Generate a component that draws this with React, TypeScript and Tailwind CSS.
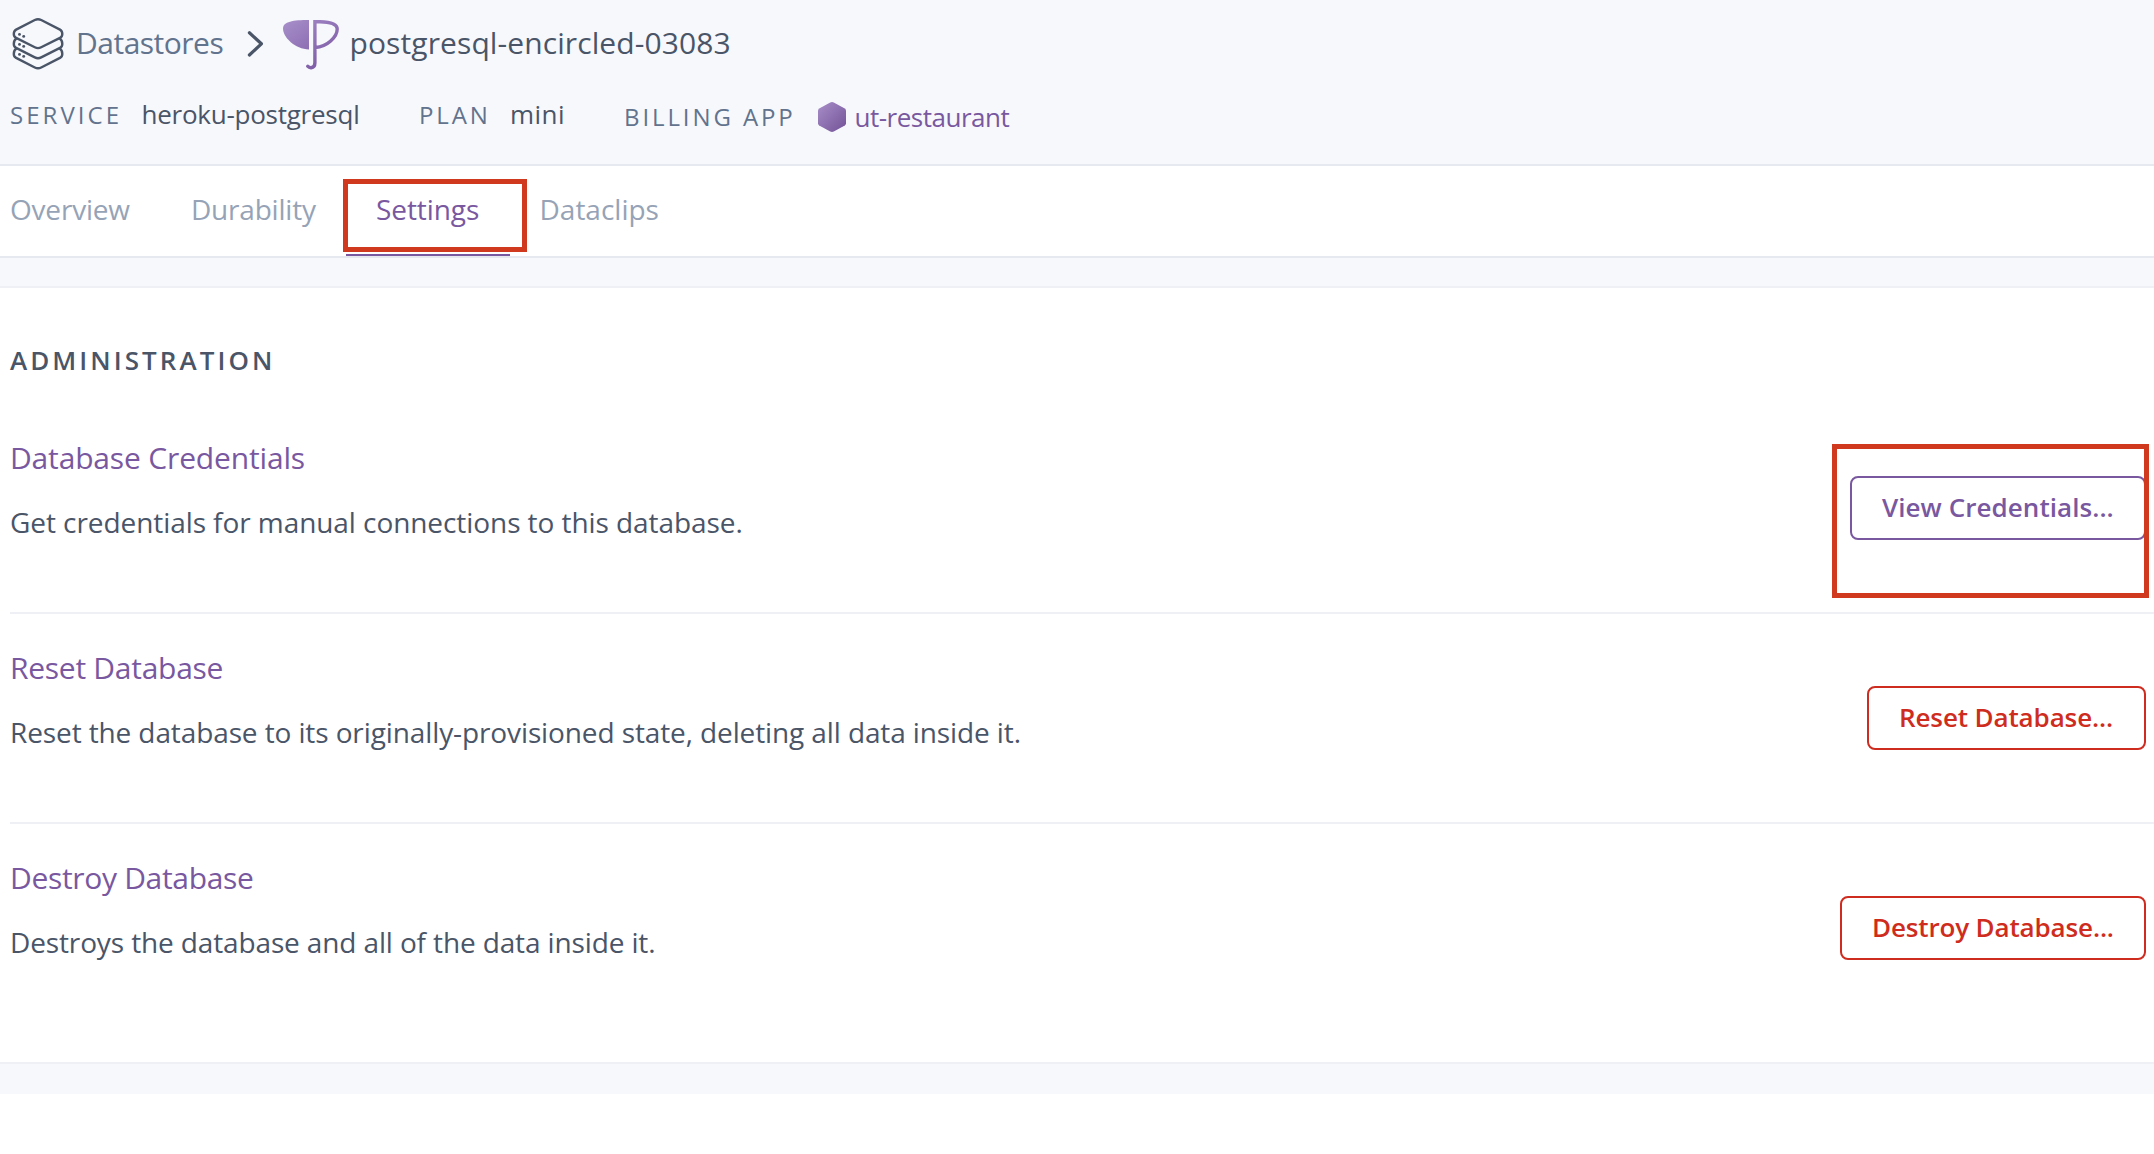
import React from "react";

function DatastoresIcon() {
  return (
    <svg className="h-[84px] w-[76px] shrink-0" viewBox="0 0 76 84" fill="none" stroke="#4a5568" strokeWidth="2.4" strokeLinejoin="round">
      <path d="M34.8 20 Q38 18.4 41.2 20 L60 29.6 Q62.3 31 62.3 33.9 Q62.3 36.6 60 37.9 L41.2 47.3 Q38 48.9 34.8 47.3 L16.1 37.9 Q13.8 36.6 13.8 33.9 Q13.8 31 16.1 29.6 Z" />
      <path d="M16.6 38.2 Q13.8 40 13.8 43.9 Q13.8 46.6 16.1 47.9 L34.8 57.4 Q38 59 41.2 57.4 L60 47.9 Q62.3 46.6 62.3 43.9 Q62.3 40 59.5 38.2" />
      <path d="M16.6 48.2 Q13.8 50 13.8 53.9 Q13.8 56.6 16.1 57.9 L34.8 67.5 Q38 69.1 41.2 67.5 L60 57.9 Q62.3 56.6 62.3 53.9 Q62.3 50 59.5 48.2" />
      <g fill="#4a5568" stroke="none">
        <circle cx="19.5" cy="34.4" r="1.45" />
        <circle cx="23.7" cy="36.4" r="1.45" />
        <circle cx="19.5" cy="44.4" r="1.45" />
        <circle cx="23.7" cy="46.4" r="1.45" />
        <circle cx="19.5" cy="54.4" r="1.45" />
        <circle cx="23.7" cy="56.4" r="1.45" />
      </g>
    </svg>
  );
}

function Chevron() {
  return (
    <svg className="h-[84px] w-[40px] shrink-0" viewBox="240 0 40 84" fill="none" stroke="#4a5568" strokeWidth="3.2" strokeLinecap="round" strokeLinejoin="round">
      <path d="M249.4 32.8 L261.4 43.8 L249.4 55" />
    </svg>
  );
}

function PostgresIcon() {
  return (
    <svg className="h-[84px] w-[69.5px] shrink-0" viewBox="280 0 69.5 84" fill="none">
      <defs>
        <linearGradient id="pg" gradientUnits="userSpaceOnUse" x1="286" y1="20" x2="320" y2="69">
          <stop offset="0" stopColor="#a78ec9" />
          <stop offset="1" stopColor="#7d5ba5" />
        </linearGradient>
      </defs>
      <path fill="url(#pg)" d="M309 20 V49.5 C295 49 283 37.5 283 28.5 C283 21.5 293 20 309 20 Z" />
      <path stroke="url(#pg)" strokeWidth="3.4" strokeLinecap="round" strokeLinejoin="miter" d="M307.7 66.2 C308.8 67.5 310 67.8 311.2 67.7 C313.6 67.5 314.9 65.8 314.9 63 V21.7 H320 C331.5 22 337.2 24 337.2 29 C337.2 37 327 46.8 315.4 47.5" />
    </svg>
  );
}

function HexagonIcon() {
  return (
    <svg className="h-[30px] w-[28px] shrink-0" viewBox="0 0 28 30">
      <defs>
        <linearGradient id="hex" x1="0" y1="0" x2="1" y2="1">
          <stop offset="0" stopColor="#a78ec9" />
          <stop offset="1" stopColor="#735296" />
        </linearGradient>
      </defs>
      <path fill="url(#hex)" d="M12.2 0.5 Q14 -0.4 15.8 0.5 L26.8 6.6 Q28 7.3 28 8.8 V21.2 Q28 22.7 26.8 23.4 L15.8 29.5 Q14 30.4 12.2 29.5 L1.2 23.4 Q0 22.7 0 21.2 V8.8 Q0 7.3 1.2 6.6 Z" />
    </svg>
  );
}

type RowProps = {
  title: string;
  titleClass: string;
  text: string;
  textClass: string;
  button: string;
  buttonClass: string;
  last?: boolean;
};

function Row({ title, titleClass, text, textClass, button, buttonClass, last }: RowProps) {
  return (
    <div className={`flex h-[210px] items-start justify-between pr-2 ${last ? "" : "border-b-2 border-[#eff0f6]"}`}>
      <div className="pt-[34px] whitespace-nowrap">
        <h3 className={`text-[30px] leading-10 text-[#79589f] ${titleClass}`}>{title}</h3>
        <p className={`mt-6 text-[28px] leading-10 ${textClass}`}>{text}</p>
      </div>
      <button className={`mt-[72px] flex h-16 items-center rounded-lg border-2 bg-white pb-[3px] pl-[30px] text-[26px] leading-10 font-semibold whitespace-nowrap ${buttonClass}`}>
        {button}
      </button>
    </div>
  );
}

export default function App() {
  return (
    <div className="relative h-[1154px] w-[2154px] overflow-hidden bg-white font-['Open_Sans',sans-serif] text-[#4a5568]">
      <header className="h-[166px] border-b-2 border-[#e7e9f1] bg-[#f7f8fc] whitespace-nowrap">
        <div className="flex h-[84px] items-start text-[30px] leading-[86px]">
          <DatastoresIcon />
          <span className="w-[164px] tracking-[-0.5px] text-[#62738d]">Datastores</span>
          <Chevron />
          <PostgresIcon />
          <span className="tracking-[0.1px]">postgresql-encircled-03083</span>
        </div>
        <div className="flex h-[60px] items-baseline pl-2.5 text-[26px] leading-[60px]">
          <span className="w-[131.5px] text-2xl leading-[60px] tracking-[3.05px] text-[#62738d]">SERVICE</span>
          <span className="w-[277.5px] tracking-[-0.25px]">heroku-postgresql</span>
          <span className="w-[91px] text-2xl leading-[60px] tracking-[2.9px] text-[#62738d]">PLAN</span>
          <span className="w-[114px] tracking-[0.47px]">mini</span>
          <div className="mt-0.5 flex items-center self-start">
            <span className="w-[194px] text-2xl leading-[62px] tracking-[2.9px] text-[#62738d]">BILLING APP</span>
            <HexagonIcon />
            <span className="pl-[8.5px] leading-[60px] tracking-[-0.49px] text-[#79589f]">ut-restaurant</span>
          </div>
        </div>
      </header>

      <nav className="flex h-[92px] border-b-2 border-[#e7e9f1] pl-2.5 text-[28px] leading-[86px] text-[#96a3b6]">
        <a className="w-[181px] tracking-[-0.2px]">Overview</a>
        <a className="w-[155px] tracking-[-0.2px]">Durability</a>
        <a className="mr-[29.5px] h-[90px] w-[164px] border-b-2 border-[#79589f] pl-[30px] tracking-[-0.07px] text-[#79589f]">Settings</a>
        <a>Dataclips</a>
      </nav>

      <div className="h-[30px] border-b-2 border-[#eff0f6] bg-[#f7f8fc]" />

      <main className="h-[774px] pt-[52px] pl-2.5">
        <h2 className="mb-6 text-[26px] leading-10 font-semibold tracking-[3.05px]">ADMINISTRATION</h2>
        <Row
          title="Database Credentials"
          titleClass="tracking-[-0.16px]"
          text="Get credentials for manual connections to this database."
          textClass="tracking-[-0.07px]"
          button="View Credentials..."
          buttonClass="w-[296px] border-[#79589f] tracking-[0.06px] text-[#79589f]"
        />
        <Row
          title="Reset Database"
          titleClass="tracking-[-0.27px]"
          text="Reset the database to its originally-provisioned state, deleting all data inside it."
          textClass="tracking-[-0.11px]"
          button="Reset Database..."
          buttonClass="w-[279px] border-[#cf2c20] tracking-[-0.12px] text-[#cf2c20]"
        />
        <Row
          title="Destroy Database"
          titleClass="tracking-[-0.32px]"
          text="Destroys the database and all of the data inside it."
          textClass="tracking-[-0.13px]"
          button="Destroy Database..."
          buttonClass="w-[306px] border-[#cf2c20] tracking-[-0.14px] text-[#cf2c20]"
          last
        />
      </main>

      <footer className="h-8 border-t-2 border-[#eff0f6] bg-[#f7f8fc]" />

      <div className="absolute top-[179px] left-[343px] h-[73px] w-[184px] border-[5px] border-[#d1391f]" />
      <div className="absolute top-[444px] left-[1832px] h-[154px] w-[317px] border-[5px] border-[#d1391f]" />
    </div>
  );
}
